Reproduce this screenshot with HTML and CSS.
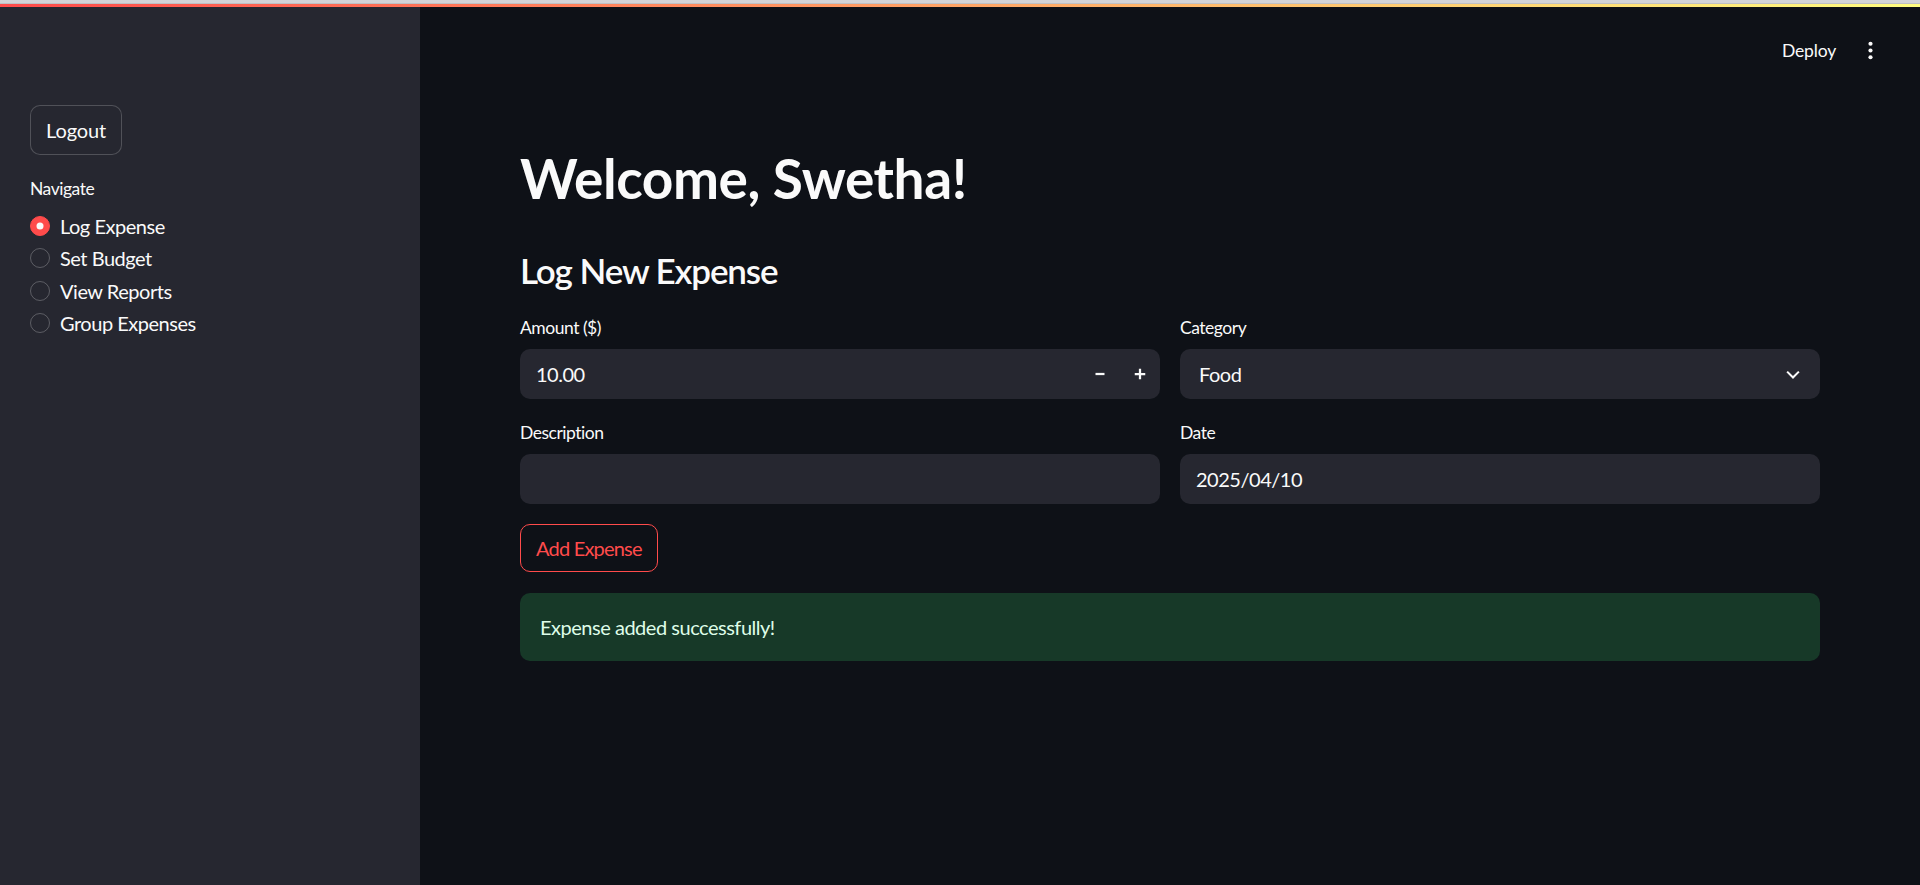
FILE: index.html
```html
<!DOCTYPE html>
<html lang="en">
<head>
<meta charset="utf-8">
<title>Expense Tracker</title>
<link rel="stylesheet" href="styles.css">
</head>
<body>
<div class="chrome"></div>
<div class="decoration"></div>
<div class="app">
  <aside class="sidebar">
    <button class="btn btn-secondary">Logout</button>
    <div class="radio-group">
      <div class="field-label">Navigate</div>
      <div class="radio checked"><span class="dot"></span><span>Log Expense</span></div>
      <div class="radio"><span class="dot"></span><span>Set Budget</span></div>
      <div class="radio"><span class="dot"></span><span>View Reports</span></div>
      <div class="radio"><span class="dot"></span><span>Group Expenses</span></div>
    </div>
  </aside>
  <main class="main">
    <header class="header">
      <span class="deploy">Deploy</span>
      <svg class="menu-icon" viewBox="0 0 24 24" width="25" height="25"><circle cx="12" cy="5.5" r="2" fill="#fafafa"/><circle cx="12" cy="12" r="2" fill="#fafafa"/><circle cx="12" cy="18.5" r="2" fill="#fafafa"/></svg>
    </header>
    <div class="content">
      <h1 class="title">Welcome, Swetha!</h1>
      <h2 class="subtitle">Log New Expense</h2>
      <div class="grid">
        <div class="field">
          <div class="field-label">Amount ($)</div>
          <div class="input">
            <span class="value">10.00</span>
            <span class="steppers">
              <span class="step"><svg viewBox="0 0 24 24" width="18" height="18"><path d="M6 10.5h12v3H6z" fill="#fafafa"/></svg></span>
              <span class="step"><svg viewBox="0 0 24 24" width="18" height="18"><path d="M10.5 5h3v5.5H19v3h-5.5V19h-3v-5.5H5v-3h5.5z" fill="#fafafa"/></svg></span>
            </span>
          </div>
        </div>
        <div class="field">
          <div class="field-label">Category</div>
          <div class="input select">
            <span class="value">Food</span>
            <svg class="chevron" viewBox="0 0 24 24" width="22" height="22"><path d="M6.4 8.6 12 14.2l5.6-5.6 1.6 1.6L12 17.4 4.8 10.2z" fill="#fafafa"/></svg>
          </div>
        </div>
        <div class="field">
          <div class="field-label">Description</div>
          <div class="input"></div>
        </div>
        <div class="field">
          <div class="field-label">Date</div>
          <div class="input"><span class="value">2025/04/10</span></div>
        </div>
      </div>
      <button class="btn btn-primary-outline">Add Expense</button>
      <div class="alert-success">Expense added successfully!</div>
    </div>
  </main>
</div>
</body>
</html>
```
FILE: styles.css
```css
* { box-sizing: border-box; }
html, body {
  margin: 0;
  padding: 0;
  height: 885px;
  overflow: hidden;
  background: #0e1117;
  font-family: "Lato", "Noto Sans", sans-serif;
  color: #fafafa;
  letter-spacing: -0.03em;
}
.chrome {
  height: 4px;
  background: #d3d4d8;
  border-bottom: 1px solid #bfc0c4;
}
.decoration {
  height: 3px;
  background: linear-gradient(90deg, #ff4b4b, #fffd80);
}
.app {
  display: flex;
  height: 878px;
}
.sidebar {
  width: 420px;
  flex: none;
  background: #262730;
  padding: 98px 30px 0 30px;
  display: flex;
  flex-direction: column;
  align-items: flex-start;
  gap: 20px;
}
.btn {
  font-family: inherit;
  font-size: 20px;
  line-height: 1.6;
  letter-spacing: -0.04em;
  border-radius: 10px;
  background: transparent;
  padding: 7px 15px;
  cursor: pointer;
}
.btn-secondary {
  color: #fafafa;
  background: #262730;
  border: 1px solid rgba(250, 250, 250, 0.2);
  height: 50px;
  letter-spacing: -0.005em;
}
.btn-primary-outline {
  color: #ff4b4b;
  background: #0e1117;
  border: 1px solid #ff4b4b;
  height: 48px;
  padding: 6px 15px;
  align-self: flex-start;
}
.radio-group {
  display: flex;
  flex-direction: column;
}
.field-label {
  font-size: 17.5px;
  line-height: 28px;
  color: #fafafa;
}
.radio-group .field-label {
  margin-bottom: 7px;
}
.radio {
  display: flex;
  align-items: center;
  gap: 10px;
  font-size: 20px;
  line-height: 32.3px;
}
.dot {
  width: 20px;
  height: 20px;
  border-radius: 50%;
  border: 1.5px solid rgba(250, 250, 250, 0.25);
  display: inline-block;
  position: relative;
}
.radio.checked .dot {
  background: #ff4b4b;
  border-color: #ff4b4b;
}
.radio.checked .dot::after {
  content: "";
  position: absolute;
  width: 7px;
  height: 7px;
  border-radius: 50%;
  background: #fafafa;
  left: 50%;
  top: 50%;
  transform: translate(-50%, -50%);
}
.main {
  flex: 1;
  display: flex;
  flex-direction: column;
}
.header {
  height: 86px;
  display: flex;
  align-items: center;
  justify-content: flex-end;
  padding: 0 37px 0 0;
  gap: 22px;
  margin-bottom: -86px;
}
.deploy {
  font-size: 17.5px;
  color: #fafafa;
  letter-spacing: -0.01em;
}
.menu-icon { display: block; }
.content {
  padding: 138px 100px 0 100px;
  display: flex;
  flex-direction: column;
}
.title {
  margin: 0;
  font-size: 55px;
  font-weight: 700;
  line-height: 66px;
  letter-spacing: -0.008em;
}
.subtitle {
  margin: 38px 0 0 0;
  font-size: 35px;
  font-weight: 600;
  line-height: 42px;
  letter-spacing: -0.032em;
}
.grid {
  margin-top: 23px;
  display: grid;
  grid-template-columns: 1fr 1fr;
  column-gap: 20px;
  row-gap: 20px;
}
.field {
  display: flex;
  flex-direction: column;
  gap: 7px;
}
.input {
  height: 50px;
  background: #262730;
  border-radius: 10px;
  display: flex;
  align-items: center;
  padding: 0 0 0 16px;
  font-size: 20px;
}
.input.select {
  padding: 0 16px 0 19px;
  justify-content: space-between;
}
.value { flex: 1; }
.steppers { display: flex; height: 100%; }
.step {
  width: 40px;
  display: flex;
  align-items: center;
  justify-content: center;
}
.chevron { display: block; }
.btn-primary-outline { margin-top: 20px; }
.alert-success {
  margin-top: 21px;
  background: #173928;
  color: #dffde9;
  border-radius: 10px;
  padding: 18px 20px;
  font-size: 20px;
  line-height: 32px;
}
```
